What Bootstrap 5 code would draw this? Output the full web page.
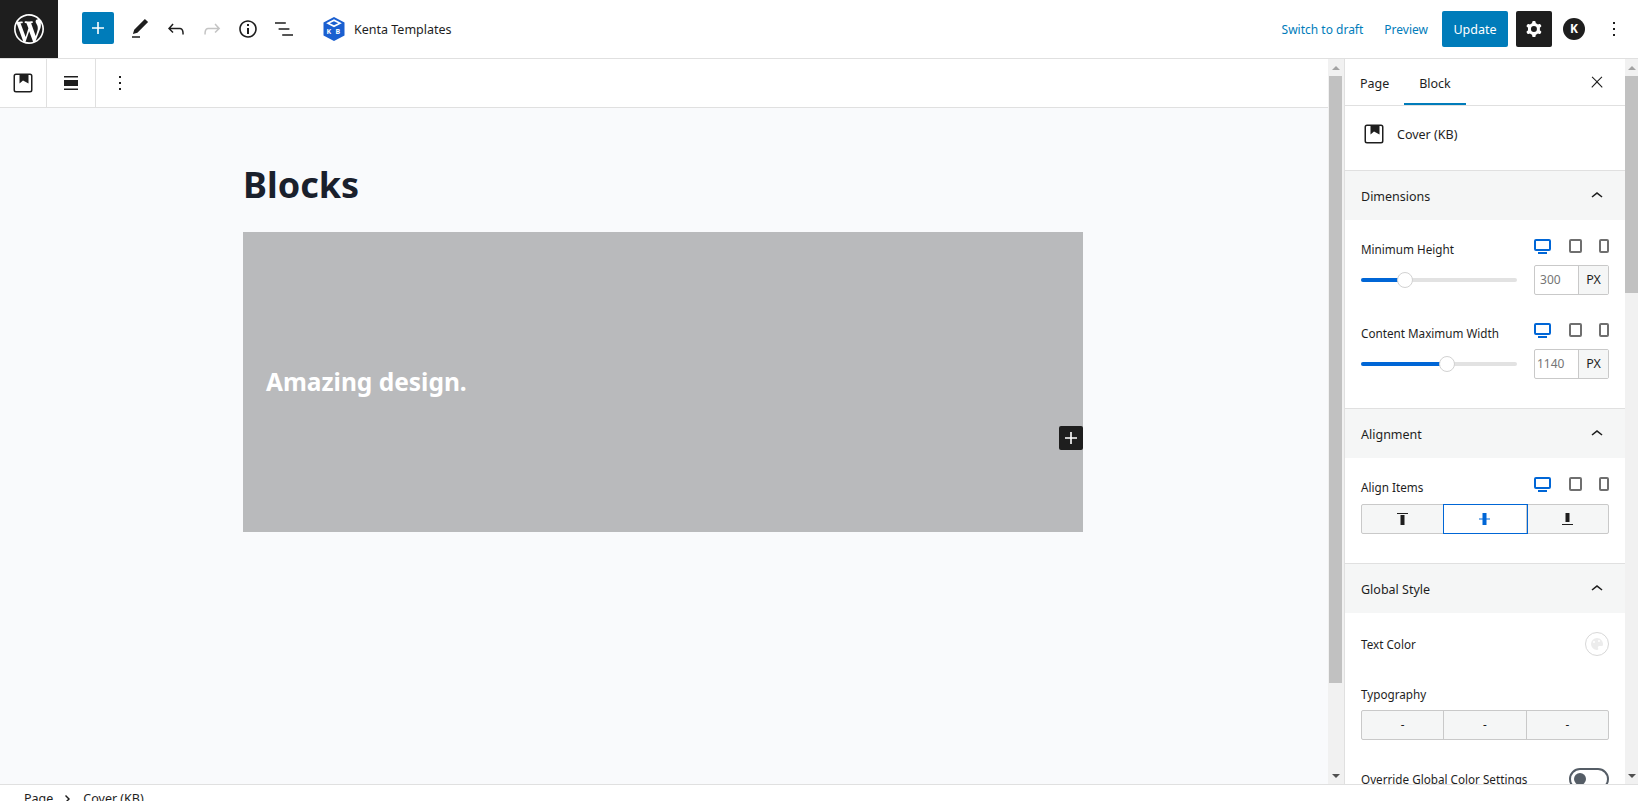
<!doctype html>
<html lang="en">
<head>
<meta charset="utf-8">
<title>Blocks</title>
<link rel="stylesheet" href="https://cdn.jsdelivr.net/npm/bootstrap@5.3.0/dist/css/bootstrap.min.css">
<style>
html,body{height:801px;overflow:hidden}
body{font-family:"Noto Sans","Open Sans",sans-serif;font-size:12.5px;color:#1e1e1e;background:#fff}
svg{display:block;fill:currentColor;flex:none}
.wp-shell{height:801px;overflow:hidden}
.wp-top{height:59px;border-bottom:1px solid #e0e0e0;flex:none}
.wp-logo{width:58px;height:58px;background:#1e1e1e;color:#fff}
.wp-add{width:32px;height:32px;background:#007cba;color:#fff;border-radius:2px;margin:0 14px 2px 24px}
.wp-tools{gap:12px}
.wp-muted{color:#c4c4c4}
.wp-site{margin-left:26px;gap:8px}
.wp-site span{padding-top:2px}
.wp-link{color:#007cba;text-decoration:none;font-size:12px;padding-top:2px}
.wp-gap{margin-left:21px}
.wp-update{background:#007cba;color:#fff;height:36px;width:66px;border-radius:2px;margin-left:14px;padding-top:2px}
.wp-gear{background:#1e1e1e;color:#fff;width:36px;height:36px;border-radius:2px;margin-left:8px}
.wp-avatar{width:22px;height:22px;background:#1e1e1e;color:#fff;border-radius:50%;font-weight:700;font-size:12px;margin-left:11px}
.wp-end{margin:0 12px 0 17px}
.wp-body{height:725px;flex:none}
.wp-blockbar{height:49px;border-bottom:1px solid #e0e0e0;flex:none}
.wp-blockcell{height:48px;border-right:1px solid #e0e0e0}
.wp-canvas{background:#f9fafc;padding-right:2px}
.wp-page{width:840px;margin:0 auto}
.wp-title{font-size:36px;font-weight:700;color:#1a202c;line-height:52px;margin:51px 0 21px 0}
.wp-cover{height:300px;background:#b9babc;color:#fff;font-size:24.500px;font-weight:700;padding-left:23px}
.wp-append{position:absolute;right:0;top:194px;width:24px;height:24px;background:#1e1e1e;color:#fff;border-radius:2px}
.wp-bar{background:#f1f1f1;flex:none;color:#a3a3a3}
.wp-bar-a{width:16px}
.wp-bar-b{width:13px}
.wp-thumb{background:#c1c1c1;margin:0 2px 0 1px}
.wp-bar-b .wp-thumb{margin:0}
.wp-arrowcell{height:17px}
.wp-up{border:4px solid transparent;border-top:0;border-bottom:4px solid #a3a3a3}
.wp-down{border:4px solid transparent;border-bottom:0;border-top:4px solid #505050}
.wp-side{width:281px;border-left:1px solid #e0e0e0;flex:none;overflow:hidden}
.wp-side>*{flex:none}
.wp-side section{font-size:11.700px}
.wp-tabs{height:47px;border-bottom:1px solid #e0e0e0;padding-left:15px;padding-right:16px}
.wp-tab{height:46px;position:relative;width:62px;padding-top:4px}
.wp-tab-first{width:44px}
.wp-tab-on{box-shadow:inset 0 -2px 0 #007cba}
.wp-info{height:65px;border-bottom:1px solid #e0e0e0;padding:0 0 8px 17px;gap:11px}
.wp-info span{padding-top:2px}
.wp-head{height:49px;background:#f5f6f6;padding:0 16px}
.wp-head span{padding-top:4px}
.wp-sec-a{height:189px;border-bottom:1px solid #e0e0e0;padding:0 16px}
.wp-sec-b{height:106px;border-bottom:1px solid #e0e0e0;padding:18px 16px 0}
.wp-sec-c{padding:19px 16px 0}
.wp-sec-c span{padding-top:2px}
.wp-grp{height:84px;padding-top:18px}
.wp-lbl{height:20px}
.wp-lbl>span{padding-top:4px}
.wp-dev{gap:17.500px;color:#6f6f6f;margin-top:-4px}
.wp-blue{color:#0066d6}
.wp-slide{margin-top:7px}
.wp-range{width:156px;height:4px;background:#e2e2e2;border-radius:2px;position:relative}
.wp-fill{height:4px;background:#0066d6;border-radius:2px}
.wp-knob{position:absolute;top:-6px;width:16px;height:16px;margin-left:-8px;border-radius:50%;background:#fff;border:1px solid #d2d2d2}
.wp-unit{width:75px;height:30px;border:1px solid #c9c9c9;border-radius:2px;font-size:12px}
.wp-num{width:44px;color:#757575;border-right:1px solid #c9c9c9;padding-left:2px}
.wp-px{background:#f5f6f6;font-size:12.500px}
.wp-seg{height:30px;border:1px solid #c9c9c9;border-radius:2px;background:#f5f6f6}
.wp-segcell{flex:1 1 0;border-right:1px solid #c9c9c9}
.wp-segcell:last-child{border-right:0}
.wp-segon{background:#fff;outline:1px solid #0066d6;color:#0066d6;z-index:1;position:relative}
.wp-seg-a{margin-top:8px}
.wp-seg-b{margin-top:6px}
.wp-swatch{width:24px;height:24px;border:1px solid #d8d8d8;border-radius:50%;color:#ececec}
.wp-typo{margin-top:28px;padding-top:2px}
.wp-over{margin-top:28px}
.wp-toggle{width:40px;height:22px;border:2px solid #555d66;border-radius:11px;padding-left:3px}
.wp-dot{width:12px;height:12px;border-radius:50%;background:#555d66}
.wp-foot{height:17px;border-top:1px solid #e0e0e0;padding-left:24px;line-height:17px;flex:none;overflow:hidden}
.wp-foot-line{height:24px;padding-top:3px;gap:10px}
.wp-cell-a{width:47px}
.wp-cell-b{width:49px}
.wp-more{padding-left:12px}
</style>
</head>
<body>
<svg width="0" height="0" class="position-absolute">
<symbol id="i-cover" viewBox="0 0 24 24"><path d="M5 2.500h14A2.500 2.500 0 0 1 21.500 5v14a2.500 2.500 0 0 1-2.500 2.500H5A2.500 2.500 0 0 1 2.500 19V5A2.500 2.500 0 0 1 5 2.500zm0 1.500a1 1 0 0 0-1 1v14a1 1 0 0 0 1 1h14a1 1 0 0 0 1-1V5a1 1 0 0 0-1-1h-1.500v8.500L12 9.500l-3.500 3V4z" fill-rule="evenodd"/></symbol>
<symbol id="i-more" viewBox="0 0 24 24"><path d="M13 19h-2v-2h2v2zm0-6h-2v-2h2v2zm0-6h-2V5h2v2z"/></symbol>
<symbol id="i-up" viewBox="0 0 24 24"><path d="M6.500 12.400L12 8l5.500 4.400-.9 1.200L12 10l-4.500 3.600-1-1.200z"/></symbol>
<symbol id="i-desk" viewBox="0 0 17 15"><path d="M2 0h13a2 2 0 0 1 2 2v8a2 2 0 0 1-2 2H2a2 2 0 0 1-2-2V2a2 2 0 0 1 2-2zm0 2v8h13V2H2zM4 13h9v2H4z" fill-rule="evenodd"/></symbol>
<symbol id="i-tab" viewBox="0 0 13 14"><path d="M2 0h9a2 2 0 0 1 2 2v10a2 2 0 0 1-2 2H2a2 2 0 0 1-2-2V2a2 2 0 0 1 2-2zm0 2v10h9V2H2z" fill-rule="evenodd"/></symbol>
<symbol id="i-ph" viewBox="0 0 10 14"><path d="M2 0h6a2 2 0 0 1 2 2v10a2 2 0 0 1-2 2H2a2 2 0 0 1-2-2V2a2 2 0 0 1 2-2zm0 2v10h6V2H2z" fill-rule="evenodd"/></symbol>
</svg>
<div class="wp-shell d-flex flex-column">
  <header class="wp-top d-flex align-items-center">
    <div class="wp-logo d-flex align-items-center justify-content-center">
      <svg width="30" height="30" viewBox="0 0 20 20"><path d="M20 10c0-5.510-4.490-10-10-10C4.480 0 0 4.490 0 10c0 5.520 4.480 10 10 10 5.510 0 10-4.480 10-10zM7.780 15.370L4.370 6.220c.55-.02 1.170-.08 1.170-.08.5-.06.44-1.130-.06-1.110 0 0-1.450.11-2.370.11-.18 0-.37 0-.58-.01C4.120 2.690 6.870 1.110 10 1.110c2.330 0 4.450.87 6.050 2.340-.68-.11-1.650.39-1.650 1.580 0 .74.45 1.360.9 2.100.35.61.55 1.360.55 2.460 0 1.490-1.400 5-1.400 5l-3.030-8.370c.54-.02.82-.17.82-.17.5-.05.44-1.250-.06-1.220 0 0-1.440.12-2.380.12-.87 0-2.330-.12-2.330-.12-.5-.03-.56 1.200-.06 1.220l.92.08 1.260 3.410zM17.410 10c.24-.64.74-1.870.43-4.250.7 1.290 1.050 2.710 1.050 4.250 0 3.290-1.730 6.240-4.400 7.780.97-2.590 1.940-5.200 2.920-7.780zM6.100 18.090C3.120 16.650 1.110 13.530 1.110 10c0-1.300.23-2.480.72-3.590C3.250 10.300 4.670 14.200 6.100 18.090zm4.030-6.630l2.580 6.980c-.86.29-1.760.45-2.710.45-.79 0-1.570-.11-2.290-.33.81-2.380 1.620-4.740 2.420-7.100z"/></svg>
    </div>
    <div class="wp-add d-flex align-items-center justify-content-center">
      <svg width="24" height="24" viewBox="0 0 24 24"><path d="M18 11.200h-5.200V6h-1.600v5.200H6v1.600h5.200V18h1.600v-5.200H18z"/></svg>
    </div>
    <div class="wp-tools d-flex align-items-center">
      <svg width="24" height="24" viewBox="0 0 24 24"><path d="M20.100 5.100L16.900 2 6.200 12.700l-1.300 4.400 4.500-1.300L20.100 5.100zM4 20.800h8v-1.500H4v1.500z"/></svg>
      <svg width="24" height="24" viewBox="0 0 24 24"><path d="M18.300 11.700c-.6-.6-1.400-.9-2.300-.9H6.700l2.900-3.300-1.100-1-4.500 5L8.500 16l1-1-2.700-2.700H16c.5 0 .9.2 1.300.5 1 1 1 3.400 1 4.500v.3h1.500v-.2c0-1.500 0-4.300-1.500-5.700z"/></svg>
      <svg class="wp-muted" width="24" height="24" viewBox="0 0 24 24"><path d="M15.600 6.500l-1.100 1 2.900 3.300H8c-.9 0-1.700.3-2.300.9-1.400 1.500-1.400 4.200-1.400 5.600v.2h1.500v-.3c0-1.100 0-3.500 1-4.500.3-.3.7-.5 1.300-.5h9.200L14.500 15l1.100 1.100 4.600-4.600-4.600-5z"/></svg>
      <svg width="24" height="24" viewBox="0 0 24 24"><path d="M12 3.200c-4.800 0-8.800 3.900-8.800 8.800 0 4.800 3.900 8.800 8.800 8.800 4.800 0 8.800-3.900 8.800-8.800 0-4.800-4-8.800-8.800-8.800zm0 16c-4 0-7.200-3.300-7.200-7.200C4.800 8 8 4.800 12 4.800s7.200 3.300 7.200 7.200c0 4-3.200 7.200-7.200 7.200zM11 17h2v-6h-2v6zm0-8h2V7h-2v2z"/></svg>
      <svg width="24" height="24" viewBox="0 0 24 24"><path d="M13.800 5.200H3v1.500h10.800V5.200zm-3.600 12v1.500H21v-1.500H10.200zm7.200-6H6.600v1.500h10.800v-1.500z"/></svg>
    </div>
    <div class="wp-site d-flex align-items-center">
      <svg width="24" height="24" viewBox="0 0 24 24"><path d="M12 0l10.500 5.500v13L12 24 1.500 18.500v-13z" fill="#1a5fd0"/><path d="M12 2.200l7.800 4L12 10.200 4.200 6.200z" fill="#fff"/><path d="M12 4.200l4.200 2L12 8.300 7.800 6.200z" fill="#1a5fd0"/><text x="4.600" y="17" font-size="7" font-weight="700" fill="#fff">K</text><text x="13.400" y="16.500" font-size="7" font-weight="700" fill="#fff">B</text></svg>
      <span>Kenta Templates</span>
    </div>
    <div class="d-flex align-items-center ms-auto">
      <a class="wp-link" href="#">Switch to draft</a>
      <a class="wp-link wp-gap" href="#">Preview</a>
      <div class="wp-update d-flex align-items-center justify-content-center">Update</div>
      <div class="wp-gear d-flex align-items-center justify-content-center">
        <svg width="24" height="24" viewBox="0 0 24 24"><path fill-rule="evenodd" d="M10.289 4.836A1 1 0 0111.275 4h1.306a1 1 0 01.987.836l.244 1.466c.787.26 1.503.679 2.108 1.218l1.393-.522a1 1 0 011.216.437l.653 1.130a1 1 0 01-.23 1.273l-1.148.944a6.025 6.025 0 010 2.435l1.149.946a1 1 0 01.23 1.272l-.653 1.130a1 1 0 01-1.216.437l-1.394-.522c-.605.54-1.320.958-2.108 1.218l-.244 1.466a1 1 0 01-.987.836h-1.306a1 1 0 01-.986-.836l-.244-1.466a5.995 5.995 0 01-2.108-1.218l-1.394.522a1 1 0 01-1.217-.436l-.653-1.131a1 1 0 01.23-1.272l1.149-.946a6.026 6.026 0 010-2.435l-1.148-.944a1 1 0 01-.23-1.272l.653-1.131a1 1 0 011.217-.437l1.393.522a5.994 5.994 0 012.108-1.218l.244-1.466zM14.929 12a3 3 0 11-6 0 3 3 0 016 0z"/></svg>
      </div>
      <div class="wp-avatar d-flex align-items-center justify-content-center">K</div>
      <svg class="wp-end" width="24" height="24"><use href="#i-more"/></svg>
    </div>
  </header>

  <div class="wp-body d-flex">
    <div class="d-flex flex-column flex-grow-1">
      <div class="wp-blockbar d-flex">
        <div class="wp-blockcell wp-cell-a d-flex align-items-center justify-content-center"><svg width="24" height="24"><use href="#i-cover"/></svg></div>
        <div class="wp-blockcell wp-cell-b d-flex align-items-center justify-content-center">
          <svg width="24" height="24" viewBox="0 0 24 24"><path d="M5 5h14v1.500H5zM5 9h14v6H5zM5 17.500h14V19H5z"/></svg>
        </div>
        <div class="wp-more d-flex align-items-center"><svg width="24" height="24"><use href="#i-more"/></svg></div>
      </div>
      <main class="wp-canvas flex-grow-1">
        <div class="wp-page">
          <h1 class="wp-title">Blocks</h1>
          <div class="wp-cover d-flex align-items-center position-relative">
            <span>Amazing design.</span>
            <div class="wp-append d-flex align-items-center justify-content-center">
              <svg width="24" height="24" viewBox="0 0 24 24"><path d="M18 11.200h-5.200V6h-1.600v5.200H6v1.600h5.200V18h1.600v-5.200H18z"/></svg>
            </div>
          </div>
        </div>
      </main>
    </div>
    <div class="wp-bar wp-bar-a d-flex flex-column">
      <div class="wp-arrowcell d-flex align-items-center justify-content-center"><div class="wp-up"></div></div>
      <div class="wp-thumb" style="height:607px"></div>
      <div class="flex-grow-1"></div>
      <div class="wp-arrowcell d-flex align-items-center justify-content-center"><div class="wp-down"></div></div>
    </div>
    <aside class="wp-side d-flex flex-column">
      <div class="wp-tabs d-flex align-items-center">
        <div class="wp-tab wp-tab-first d-flex align-items-center">Page</div>
        <div class="wp-tab wp-tab-on d-flex align-items-center justify-content-center">Block</div>
        <svg class="ms-auto" width="24" height="24" viewBox="0 0 24 24"><path d="M13 11.800l6.100-6.300-1-1-6.100 6.200-6.100-6.200-1 1 6.100 6.300-6.500 6.700 1 1 6.500-6.600 6.500 6.600 1-1z" transform="translate(3 3) scale(.75)"/></svg>
      </div>
      <div class="wp-info d-flex align-items-center">
        <svg width="24" height="24"><use href="#i-cover"/></svg>
        <span>Cover (KB)</span>
      </div>
      <div class="wp-head d-flex align-items-center justify-content-between">
        <span>Dimensions</span><svg width="24" height="24"><use href="#i-up"/></svg>
      </div>
      <section class="wp-sec-a">
        <div class="wp-grp">
          <div class="wp-lbl d-flex align-items-center justify-content-between">
            <span>Minimum Height</span>
            <div class="wp-dev d-flex align-items-center">
              <svg class="wp-blue" width="17" height="15"><use href="#i-desk"/></svg><svg width="13" height="14"><use href="#i-tab"/></svg><svg width="10" height="14"><use href="#i-ph"/></svg>
            </div>
          </div>
          <div class="wp-slide d-flex align-items-center justify-content-between">
            <div class="wp-range"><div class="wp-fill" style="width:44px"></div><div class="wp-knob" style="left:44px"></div></div>
            <div class="wp-unit d-flex"><div class="wp-num d-flex align-items-center">&nbsp;300</div><div class="wp-px d-flex align-items-center justify-content-center flex-grow-1">PX</div></div>
          </div>
        </div>
        <div class="wp-grp">
          <div class="wp-lbl d-flex align-items-center justify-content-between">
            <span>Content Maximum Width</span>
            <div class="wp-dev d-flex align-items-center">
              <svg class="wp-blue" width="17" height="15"><use href="#i-desk"/></svg><svg width="13" height="14"><use href="#i-tab"/></svg><svg width="10" height="14"><use href="#i-ph"/></svg>
            </div>
          </div>
          <div class="wp-slide d-flex align-items-center justify-content-between">
            <div class="wp-range"><div class="wp-fill" style="width:86px"></div><div class="wp-knob" style="left:86px"></div></div>
            <div class="wp-unit d-flex"><div class="wp-num d-flex align-items-center">1140</div><div class="wp-px d-flex align-items-center justify-content-center flex-grow-1">PX</div></div>
          </div>
        </div>
      </section>
      <div class="wp-head d-flex align-items-center justify-content-between">
        <span>Alignment</span><svg width="24" height="24"><use href="#i-up"/></svg>
      </div>
      <section class="wp-sec-b">
        <div class="wp-lbl d-flex align-items-center justify-content-between">
          <span>Align Items</span>
          <div class="wp-dev d-flex align-items-center">
            <svg class="wp-blue" width="17" height="15"><use href="#i-desk"/></svg><svg width="13" height="14"><use href="#i-tab"/></svg><svg width="10" height="14"><use href="#i-ph"/></svg>
          </div>
        </div>
        <div class="wp-seg wp-seg-a d-flex">
          <div class="wp-segcell d-flex align-items-center justify-content-center"><svg width="11" height="12" viewBox="0 0 11 12"><path d="M0 0h11v1H0zM3.500 2h4v10h-4z"/></svg></div>
          <div class="wp-segcell wp-segon d-flex align-items-center justify-content-center"><svg width="11" height="12" viewBox="0 0 11 12"><path d="M3.500 0h4v5.500H11v1H7.500V12h-4V6.500H0v-1h3.500z"/></svg></div>
          <div class="wp-segcell d-flex align-items-center justify-content-center"><svg width="11" height="12" viewBox="0 0 11 12"><path d="M3.500 0h4v9h-4zM0 11h11v1H0z"/></svg></div>
        </div>
      </section>
      <div class="wp-head d-flex align-items-center justify-content-between">
        <span>Global Style</span><svg width="24" height="24"><use href="#i-up"/></svg>
      </div>
      <section class="wp-sec-c">
        <div class="d-flex align-items-center justify-content-between">
          <span>Text Color</span>
          <div class="wp-swatch d-flex align-items-center justify-content-center"><svg width="14" height="14" viewBox="0 0 14 14"><path d="M7 1a6 6 0 1 0 0 12c1.500 0 1.500-1 1-2-.5-1 0-2 1.500-2H12c1 0 1-1 1-2 0-3-2.700-6-6-6zM4 6a1 1 0 1 1 0-2 1 1 0 0 1 0 2zm5-1a1 1 0 1 1 0-2 1 1 0 0 1 0 2z" fill-rule="evenodd"/></svg></div>
        </div>
        <div class="wp-lbl wp-typo d-flex align-items-center">Typography</div>
        <div class="wp-seg wp-seg-b d-flex">
          <div class="wp-segcell d-flex align-items-center justify-content-center">-</div>
          <div class="wp-segcell d-flex align-items-center justify-content-center">-</div>
          <div class="wp-segcell d-flex align-items-center justify-content-center">-</div>
        </div>
        <div class="wp-over d-flex align-items-center justify-content-between">
          <span>Override Global Color Settings</span>
          <div class="wp-toggle d-flex align-items-center"><div class="wp-dot"></div></div>
        </div>
      </section>
    </aside>
    <div class="wp-bar wp-bar-b d-flex flex-column">
      <div class="wp-arrowcell d-flex align-items-center justify-content-center"><div class="wp-up"></div></div>
      <div class="wp-thumb" style="height:217px"></div>
      <div class="flex-grow-1"></div>
      <div class="wp-arrowcell d-flex align-items-center justify-content-center"><div class="wp-down"></div></div>
    </div>
  </div>

  <footer class="wp-foot">
    <div class="wp-foot-line d-flex align-items-center">
      <span>Page</span>
      <svg width="10" height="10" viewBox="0 0 10 10"><path d="M3 1l4 4-4 4-1-1 3-3-3-3z"/></svg>
      <span>Cover (KB)</span>
    </div>
  </footer>
</div>
</body>
</html>
